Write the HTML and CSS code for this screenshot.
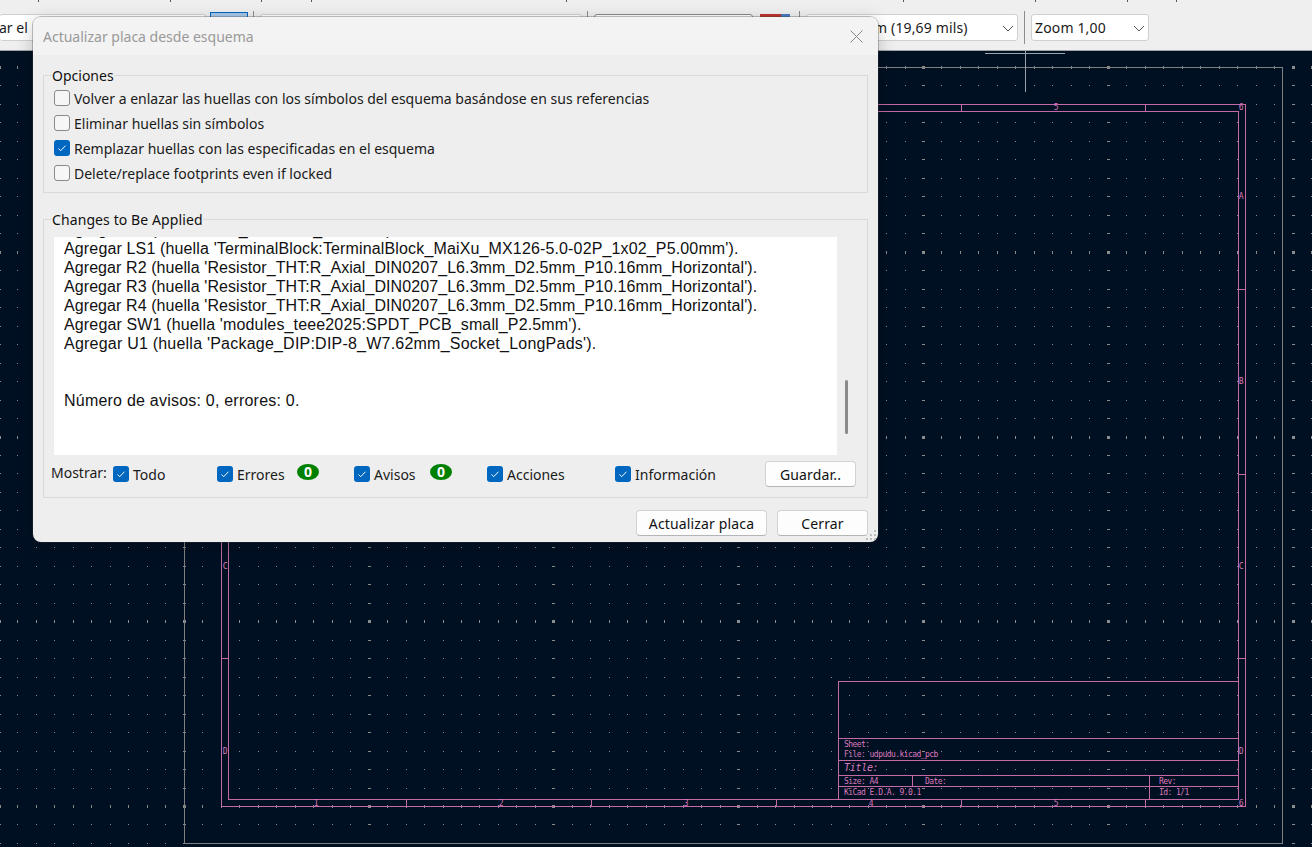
FILE: index.html
```html
<!DOCTYPE html>
<html lang="es">
<head>
    <meta charset="UTF-8">
    <title>Actualizar placa desde esquema</title>
    <link rel="stylesheet" href="styles.css">
</head>
<body>
    <div class="toolbar">
        <svg class="menu-ticks" width="1312" height="2">
            <path d="M38.5 0v2M170.5 0v2M261.5 0v2M311.5 0v2M566.5 0v2M903.5 0v2M1035.5 0v2M1127.5 0v2M1176.5 0v2" stroke="#555"/>
        </svg>
        <div class="field field-first">ar el</div>
        <div class="tool-btn"><span class="pin"></span><span class="pin"></span></div>
        <div class="sep sep-a"></div>
        <div class="field field-wide"></div>
        <div class="sep"></div>
        <div class="field field-dark"></div>
        <div class="swatch"><span class="swatch-red"></span><span class="swatch-blue"></span></div>
        <div class="sep sep-b"></div>
        <div class="field field-grid">m (19,69 mils)
            <svg class="chevron" width="12" height="7" viewBox="0 0 12 7"><path d="M1 1l5 5 5-5" fill="none" stroke="#555"/></svg>
        </div>
        <div class="sep sep-c"></div>
        <div class="field field-zoom">Zoom 1,00
            <svg class="chevron" width="12" height="7" viewBox="0 0 12 7"><path d="M1 1l5 5 5-5" fill="none" stroke="#555"/></svg>
        </div>
    </div>

    <svg class="canvas" viewBox="0 51 1312 796" width="1312" height="796">
        <path id="grid" fill="#8c8c8c" shape-rendering="crispEdges"/>
        <g fill="none" stroke="#808080" shape-rendering="crispEdges">
            <rect x="184.5" y="67.5" width="1098" height="776"/>
            <!-- crosshair -->
            <path d="M985 53.5h80M1025.5 51v41" stroke="#9aa3ab"/>
        </g>
        <g fill="none" stroke="#c46aa6" shape-rendering="crispEdges">
            <rect x="221.5" y="104.5" width="1024" height="702"/>
            <rect x="228.5" y="111.5" width="1010" height="688"/>
            <path d="M406.5 799v7M591.5 799v7M776.5 799v7M961.5 799v7M1145.5 799v7"/>
            <path d="M961.5 104v7M1145.5 104v7"/>
            <path d="M221 658.5h7M1238 289.5h7M1238 474.5h7M1238 658.5h7"/>
            <!-- title block -->
            <path d="M838.5 799V681.5H1238M838 738.5h400M838 760.5h400M838 775.5h400M838 786.5h400M912.5 775v11M1149.5 775v24"/>
        </g>
        <g class="sheet-text">
            <text x="1056" y="110" text-anchor="middle">5</text>
            <text x="1241" y="110" text-anchor="middle">6</text>
            <text x="316" y="806" text-anchor="middle">1</text>
            <text x="501" y="806" text-anchor="middle">2</text>
            <text x="686" y="806" text-anchor="middle">3</text>
            <text x="871" y="806" text-anchor="middle">4</text>
            <text x="1056" y="806" text-anchor="middle">5</text>
            <text x="1241" y="806" text-anchor="middle">6</text>
            <text x="1241" y="199" text-anchor="middle">A</text>
            <text x="1241" y="384" text-anchor="middle">B</text>
            <text x="1241" y="569" text-anchor="middle">C</text>
            <text x="1241" y="754" text-anchor="middle">D</text>
            <text x="225" y="569" text-anchor="middle">C</text>
            <text x="225" y="754" text-anchor="middle">D</text>
            <text x="844" y="747">Sheet:</text>
            <text x="844" y="757">File: udpudu.kicad_pcb</text>
            <text x="844" y="771" class="sheet-title">Title:</text>
            <text x="844" y="784">Size: A4</text>
            <text x="925" y="784">Date:</text>
            <text x="1159" y="784">Rev:</text>
            <text x="844" y="795">KiCad E.D.A. 9.0.1</text>
            <text x="1159" y="795">Id: 1/1</text>
        </g>
    </svg>

    <div class="dialog">
        <div class="titlebar">
            <span class="title">Actualizar placa desde esquema</span>
            <svg class="close" width="13" height="13" viewBox="0 0 13 13"><path d="M.5.5l12 12M12.5.5l-12 12" stroke="#888" fill="none"/></svg>
        </div>

        <fieldset class="group group-options">
            <legend>Opciones</legend>
            <label class="check"><span class="box"></span>Volver a enlazar las huellas con los símbolos del esquema basándose en sus referencias</label>
            <label class="check"><span class="box"></span>Eliminar huellas sin símbolos</label>
            <label class="check"><span class="box on"><svg viewBox="0 0 16 16"><path d="M4.5 8.5l2.2 2.2 4.8-5"/></svg></span>Remplazar huellas con las especificadas en el esquema</label>
            <label class="check"><span class="box"></span>Delete/replace footprints even if locked</label>
        </fieldset>

        <fieldset class="group group-changes">
            <legend>Changes to Be Applied</legend>
            <div class="log-row">
                <div class="log">
                    <div class="log-lines">
                        <div class="line">Agregar D1 (huella 'LED_THT:LED_D5.0mm').</div>
                        <div class="line spaced">Agregar LS1 (huella 'TerminalBlock:TerminalBlock_MaiXu_MX126-5.0-02P_1x02_P5.00mm').</div>
                        <div class="line">Agregar R2 (huella 'Resistor_THT:R_Axial_DIN0207_L6.3mm_D2.5mm_P10.16mm_Horizontal').</div>
                        <div class="line">Agregar R3 (huella 'Resistor_THT:R_Axial_DIN0207_L6.3mm_D2.5mm_P10.16mm_Horizontal').</div>
                        <div class="line">Agregar R4 (huella 'Resistor_THT:R_Axial_DIN0207_L6.3mm_D2.5mm_P10.16mm_Horizontal').</div>
                        <div class="line spaced">Agregar SW1 (huella 'modules_teee2025:SPDT_PCB_small_P2.5mm').</div>
                        <div class="line wide">Agregar U1 (huella 'Package_DIP:DIP-8_W7.62mm_Socket_LongPads').</div>
                        <div class="line">&nbsp;</div>
                        <div class="line">&nbsp;</div>
                        <div class="line wide">Número de avisos: 0, errores: 0.</div>
                    </div>
                </div>
                <div class="scroll"><div class="thumb"></div></div>
            </div>
            <div class="filters">
                <span class="show-label">Mostrar:</span>
                <label class="check w-todo"><span class="box on"><svg viewBox="0 0 16 16"><path d="M4.5 8.5l2.2 2.2 4.8-5"/></svg></span>Todo</label>
                <label class="check w-err"><span class="box on"><svg viewBox="0 0 16 16"><path d="M4.5 8.5l2.2 2.2 4.8-5"/></svg></span>Errores</label>
                <span class="badge badge-err">0</span>
                <label class="check w-warn"><span class="box on"><svg viewBox="0 0 16 16"><path d="M4.5 8.5l2.2 2.2 4.8-5"/></svg></span>Avisos</label>
                <span class="badge badge-warn">0</span>
                <label class="check w-act"><span class="box on"><svg viewBox="0 0 16 16"><path d="M4.5 8.5l2.2 2.2 4.8-5"/></svg></span>Acciones</label>
                <label class="check w-info"><span class="box on"><svg viewBox="0 0 16 16"><path d="M4.5 8.5l2.2 2.2 4.8-5"/></svg></span>Información</label>
                <button class="btn btn-save">Guardar..</button>
            </div>
        </fieldset>

        <div class="footer">
            <button class="btn btn-update">Actualizar placa</button>
            <button class="btn btn-close">Cerrar</button>
        </div>

        <svg class="grip" width="13" height="13" viewBox="0 0 13 13">
            <path d="M10 1h2v2h-2zM6 5h2v2H6zM10 5h2v2h-2zM2 9h2v2H2zM6 9h2v2H6zM10 9h2v2h-2z" fill="#bdbdbd"/>
        </svg>
    </div>

    <script src="grid.js"></script>
</body>
</html>
```
FILE: styles.css
```css
html, body {
    margin: 0;
    height: 100%;
    overflow: hidden;
    background: #001023;
}
body {
    font-family: "Noto Sans", sans-serif;
    font-size: 14px;
    color: #1a1a1a;
    position: relative;
}

/* toolbar behind the dialog */
.toolbar {
    height: 50px;
    background: #efefef;
    border-bottom: 1px solid #a3a3a3;
    display: flex;
    align-items: center;
    position: relative;
}
.menu-ticks {
    position: absolute;
    left: 0;
    top: 0;
}
.field {
    height: 27px;
    box-sizing: border-box;
    background: #fff;
    border: 1px solid #d0d0d0;
    border-radius: 3px;
    margin-top: 5px;
    line-height: 25px;
    position: relative;
    white-space: nowrap;
}
.field-first {
    width: 206px;
    border-left: none;
    text-indent: -1px;
    overflow: hidden;
}
.tool-btn {
    width: 38px;
    height: 34px;
    margin: 8px 0 0 4px;
    box-sizing: border-box;
    background: #a6c8e8;
    border: 1px solid #0067c0;
    display: flex;
    justify-content: space-between;
    padding: 5px 4px 0;
}
.pin {
    width: 3px;
    height: 20px;
    margin: 0 2px;
    background: #444;
}
.sep {
    width: 1px;
    height: 33px;
    margin: 5px 6px 0 5px;
    background: #8c8c8c;
}
.sep-b {
    margin-left: 9px;
}
.sep-c {
    margin-left: 6px;
}
.field-wide {
    width: 322px;
}
.field-dark {
    width: 159px;
    border-color: #8a8a8a;
}
.swatch {
    display: flex;
    width: 30px;
    height: 24px;
    margin: 2px 0 0 7px;
}
.swatch-red {
    width: 21px;
    background: #c0332f;
}
.swatch-blue {
    width: 9px;
    background: #4a7cc4;
}
.field-grid {
    width: 212px;
    padding-left: 67px;
    box-sizing: border-box;
    letter-spacing: 0.15px;
}
.field-zoom {
    width: 118px;
    padding-left: 3px;
    letter-spacing: 0.15px;
}
.chevron {
    position: absolute;
    right: 3px;
    top: 10px;
}

.canvas {
    display: block;
}
.sheet-text text {
    font-family: "DejaVu Sans Mono", monospace;
    font-size: 8px;
    letter-spacing: -0.55px;
    fill: #dc78bc;
}
.sheet-text .sheet-title {
    font-size: 10px;
    font-style: italic;
    letter-spacing: -0.3px;
}

/* dialog */
.dialog {
    position: absolute;
    left: 33px;
    top: 17px;
    width: 845px;
    height: 525px;
    box-sizing: border-box;
    padding: 0 10px;
    background: #eeeeee;
    border-radius: 8px;
    box-shadow: 0 0 0 1px rgba(60, 60, 60, 0.3), 0 4px 18px rgba(0, 0, 0, 0.22);
}
.titlebar {
    height: 38px;
    margin: 0 -10px;
    padding: 0 10px;
    background: #f3f3f3;
    border-radius: 8px 8px 0 0;
    display: flex;
    align-items: center;
    justify-content: space-between;
}
.title {
    color: #999;
}
.close {
    margin-right: 5px;
}
.group {
    margin: 0;
    padding: 0;
    min-width: 0;
    border: 1px solid #d9d9d9;
}
.group legend {
    padding: 2px 0 0;
    line-height: 18px;
    color: #111;
}
.group-options legend {
    margin-left: -2px;
}
.group-changes legend {
    margin-left: 1px;
    letter-spacing: 0.1px;
}
.group-options {
    margin-top: 10px;
    height: 128px;
    padding: 5px 0 0 10px;
    box-sizing: border-box;
}
.group-changes {
    margin-top: 16px;
    height: 289px;
    padding: 8px 0 0 7px;
    box-sizing: border-box;
}
.check {
    display: flex;
    align-items: center;
    height: 16px;
    margin-bottom: 9px;
    white-space: nowrap;
}
.box {
    width: 16px;
    height: 16px;
    box-sizing: border-box;
    border: 1px solid #8a8a8a;
    border-radius: 3px;
    background: #f6f6f6;
    margin-right: 4px;
    flex: none;
}
.box.on {
    border: none;
    background: #0067c0;
}
.box svg {
    display: block;
    width: 16px;
    height: 16px;
}
.box svg path {
    fill: none;
    stroke: #fff;
    stroke-width: 1;
}

.log-row {
    display: flex;
    height: 218px;
}
.log {
    width: 783px;
    margin-left: 3px;
    background: #fff;
    overflow: hidden;
    font-family: "Liberation Sans", Arial, sans-serif;
    font-size: 16px;
    letter-spacing: 0.08px;
    color: #111;
}
.log-lines {
    margin-top: -17px;
    padding-left: 10px;
}
.line {
    height: 19px;
    line-height: 19px;
    white-space: nowrap;
}
.line.spaced {
    letter-spacing: 0.145px;
}
.line.wide {
    letter-spacing: 0.22px;
}
.scroll {
    margin-left: 8px;
    padding-top: 143px;
}
.thumb {
    width: 3px;
    height: 54px;
    border-radius: 2px;
    background: #8a8a8a;
}

.filters {
    display: flex;
    align-items: center;
    height: 26px;
    margin-top: 6px;
}
.show-label {
    width: 62px;
    margin-top: -3px;
}
.filters .check {
    margin-bottom: 0;
}
.w-todo { width: 104px; }
.w-err { width: 80px; }
.w-warn { width: 76px; margin-left: 35px; }
.w-act { width: 128px; margin-left: 35px; }
.w-info { width: 150px; }
.badge {
    width: 22px;
    height: 16px;
    margin-top: -5px;
    border-radius: 50%;
    background: #008000;
    color: #fff;
    font-weight: bold;
    font-size: 14px;
    line-height: 16px;
    text-align: center;
}
.btn {
    height: 26px;
    box-sizing: border-box;
    padding: 0;
    font-family: inherit;
    font-size: 14px;
    letter-spacing: 0.15px;
    color: #111;
    background: #fdfdfd;
    border: 1px solid #d2d2d2;
    border-bottom-color: #b5b5b5;
    border-radius: 4px;
}
.btn-save { width: 91px; }
.footer {
    display: flex;
    justify-content: flex-end;
    gap: 10px;
    margin-top: 12px;
}
.btn-update { width: 131px; }
.btn-close { width: 91px; }
.grip {
    position: absolute;
    right: 1px;
    bottom: 0;
}
```
FILE: grid.js
```js
// KiCad style dot grid: every 10th row and column gets a longer tick
var xStart = 183.8, yStart = 806, step = 18.48;
var d = '';
for (var j = -10; j <= 61; j++) {
    for (var k = -3; k <= 41; k++) {
        var x = Math.round(xStart + j * step);
        var y = Math.round(yStart - k * 18.475);
        var w = 1, h = 1;
        if (j % 10 === 0) w = 3;
        if (k % 10 === 0) h = 3;
        d += 'M' + (x - (w - 1) / 2) + ' ' + (y - (h - 1) / 2) + 'h' + w + 'v' + h + 'h-' + w + 'z';
    }
}
document.getElementById('grid').setAttribute('d', d);
```
